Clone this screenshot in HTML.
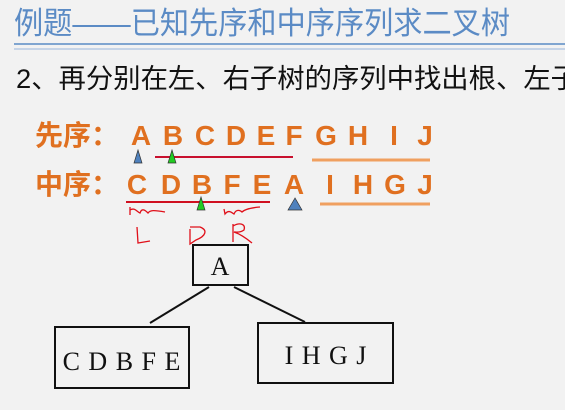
<!DOCTYPE html>
<html><head><meta charset="utf-8"><style>
html,body{margin:0;padding:0;background:#f2f2f2;width:565px;height:410px;overflow:hidden}
svg{display:block}
.cj{font-family:"Liberation Sans","Noto Sans CJK SC",sans-serif}
.or{font-family:"Liberation Sans","Noto Sans CJK SC",sans-serif;font-weight:bold;fill:#e07020;font-size:28px}
.tr{font-family:"Liberation Serif",serif;fill:#111;font-size:26px}
</style></head><body>
<svg width="565" height="410" viewBox="0 0 565 410">
<text x="14" y="34" class="cj" font-size="31" fill="#5b8bc5" textLength="496" lengthAdjust="spacingAndGlyphs">例题——已知先序和中序序列求二叉树</text>
<line x1="14" y1="44" x2="565" y2="44" stroke="#5b8bc5" stroke-width="1.5"/>
<line x1="14" y1="49" x2="565" y2="49" stroke="#9ab7dc" stroke-width="1"/>
<text x="16" y="88" class="cj" font-size="27" fill="#111" textLength="562" lengthAdjust="spacingAndGlyphs">2、再分别在左、右子树的序列中找出根、左子</text>
<text x="35" y="145" class="or">先序：</text>
<text x="35" y="194" class="or">中序：</text>
<g class="or" text-anchor="middle">
<text x="141" y="145">A</text><text x="173" y="145">B</text><text x="205" y="145">C</text><text x="236" y="145">D</text><text x="266" y="145">E</text><text x="294" y="145">F</text><text x="326" y="145">G</text><text x="358" y="145">H</text><text x="394" y="145">I</text><text x="425" y="145">J</text>
<text x="137" y="194">C</text><text x="171" y="194">D</text><text x="202" y="194">B</text><text x="232" y="194">F</text><text x="262" y="194">E</text><text x="294" y="194">A</text><text x="330" y="194">I</text><text x="363" y="194">H</text><text x="395" y="194">G</text><text x="425" y="194">J</text>
</g>
<line x1="155" y1="157" x2="293" y2="157" stroke="#c8102e" stroke-width="2"/>
<line x1="312" y1="160" x2="430" y2="160" stroke="#f0a060" stroke-width="3"/>
<line x1="126" y1="202" x2="270" y2="202" stroke="#d01020" stroke-width="2"/>
<line x1="320" y1="204" x2="430" y2="204" stroke="#f0a060" stroke-width="3"/>
<polygon points="138,150 134,163 142,163" fill="#4f81bd" stroke="#333" stroke-width="0.7"/>
<polygon points="172,150 168,163 176,163" fill="#22cc22" stroke="#333" stroke-width="0.7"/>
<polygon points="201,197 197,210 205,210" fill="#22cc22" stroke="#333" stroke-width="0.7"/>
<polygon points="295,198 288,210 302,210" fill="#4f81bd" stroke="#333" stroke-width="0.7"/>
<g fill="none" stroke="#e0101a" stroke-width="1.3">
<path d="M130,207 L130,215 M130,210 C135,207 137,212 140,213 C142,207 146,211 148,213 C150,210 154,210 165,212"/>
<path d="M224,209 L225,214 C229,209 232,213 234,214 C236,209 240,210 242,212 C244,210 248,208 260,207"/>
<path d="M137,227 L138,243 L150,241"/>
<path d="M190,229 L190,244 L196,240 C206,236 208,230 200,227 L190,227"/>
<path d="M233,224 L233,242 M233,226 C240,222 246,224 244,230 C240,233 236,232 234,232 C240,234 246,238 252,243"/>
</g>
<g stroke="#111" stroke-width="2" fill="none">
<rect x="193" y="245" width="55" height="40"/>
<rect x="55" y="327" width="134" height="61"/>
<rect x="258" y="323" width="135" height="60"/>
<line x1="209" y1="287" x2="150" y2="323"/>
<line x1="234" y1="287" x2="305" y2="322"/>
</g>
<text x="220" y="275" class="tr" text-anchor="middle">A</text>
<text x="122" y="370" class="tr" text-anchor="middle" letter-spacing="1">C D B F E</text>
<text x="326" y="364" class="tr" text-anchor="middle" letter-spacing="1">I H G J</text>
</svg>
</body></html>
